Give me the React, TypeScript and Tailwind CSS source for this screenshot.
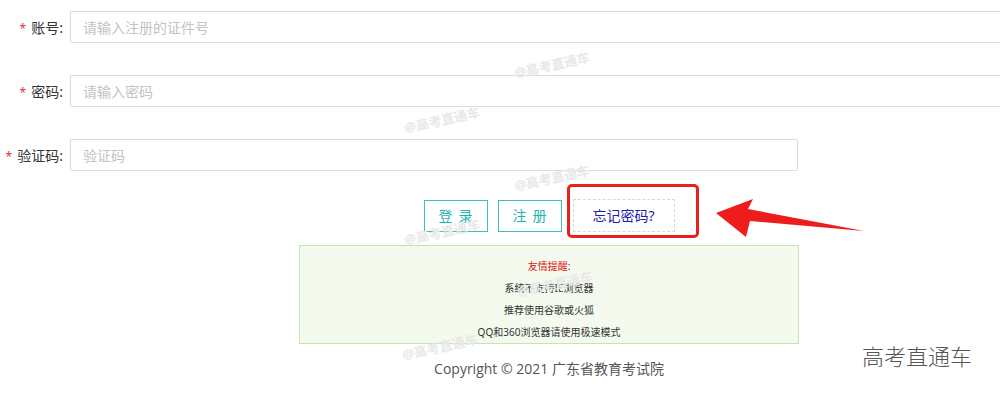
import React from "react";

const marks: { x: number; y: number }[] = [
  { x: 552, y: 65 },
  { x: 442, y: 120 },
  { x: 552, y: 178 },
  { x: 442, y: 232 },
  { x: 555, y: 284 },
  { x: 440, y: 347 },
];

function Row({ label, placeholder, wide }: { label: string; placeholder: string; wide: boolean }) {
  return (
    <div className="flex items-center h-8">
      <label className="w-[70px] shrink-0 pr-[7px] text-right text-[14px] text-[#333] whitespace-nowrap">
        <span className="text-[#d9363e] text-[12px] mr-[5px]">*</span>
        {label}:
      </label>
      <input
        readOnly
        placeholder={placeholder}
        className={`${wide ? "w-[1000px]" : "w-[728px]"} shrink-0 h-8 border border-[#dcdcdc] rounded-[2px] px-[12px] text-[14px] outline-none bg-white placeholder:text-[#c3c3c3] font-['Noto_Sans_CJK_SC',sans-serif]`}
      />
    </div>
  );
}

export default function App() {
  return (
    <div className="relative w-[1000px] h-[394px] overflow-hidden bg-white font-['Noto_Sans','Noto_Sans_CJK_SC',sans-serif]">
      <div className="pt-[11px] flex flex-col gap-8">
        <Row label="账号" placeholder="请输入注册的证件号" wide />
        <Row label="密码" placeholder="请输入密码" wide />
        <Row label="验证码" placeholder="验证码" wide={false} />
      </div>

      <div className="ml-[299px] w-[500px] flex flex-col">
        <div className="mt-[28px] flex justify-center items-center">
          <button className="w-[64px] h-[32px] border border-[#3dbdbb] text-[#22b1ae] text-[14px] tracking-[6px] pl-[6px] bg-white">
            登录
          </button>
          <button className="ml-[10px] w-[64px] h-[32px] border border-[#3dbdbb] text-[#22b1ae] text-[14px] tracking-[6px] pl-[6px] bg-white">
            注册
          </button>
          <div className="ml-[11px] w-[102px] h-[33px] border border-dashed border-[#d8d8d8] flex items-center justify-center text-[14px] text-[#1a22a8]">
            忘记密码?
          </div>
        </div>

        <div className="mt-[13px] h-[99px] border border-[#c3e6ad] bg-[#f4fbee] pt-[9px] text-center text-[10px] leading-[22px] text-[#333]">
          <div className="text-[#e01515]">
            友情提醒<span className="text-[#333]">:</span>
          </div>
          <div>系统不支持IE浏览器</div>
          <div>推荐使用谷歌或火狐</div>
          <div>QQ和360浏览器请使用极速模式</div>
        </div>

        <div className="mt-[15px] text-center text-[14px] leading-[20px] text-[#555] font-['Open_Sans','Noto_Sans_CJK_SC',sans-serif]">
          Copyright © 2021 广东省教育考试院
        </div>
      </div>

      {marks.map((m, i) => (
        <span
          key={i}
          className="absolute w-[84px] text-center text-[13px] font-bold leading-[18px] text-[#e8e8e8] -rotate-[12deg] whitespace-nowrap"
          style={{ left: m.x - 42, top: m.y - 9 }}
        >
          @高考直通车
        </span>
      ))}

      <div className="absolute left-[567px] top-[184px] w-[132px] h-[54px] border-[3px] border-[#e8211b] rounded-[5px]" />

      <svg className="absolute left-[700px] top-[190px]" width="170" height="55" viewBox="0 0 170 55">
        <polygon points="16,23 53,9 48,19 164,41 50,31 46,47" fill="#ee1d1d" />
      </svg>

      <div className="absolute left-[862px] top-[341px] text-[22px] leading-[28px] font-light text-[#555] font-['Noto_Sans_CJK_SC',sans-serif]">
        高考直通车
      </div>
    </div>
  );
}
